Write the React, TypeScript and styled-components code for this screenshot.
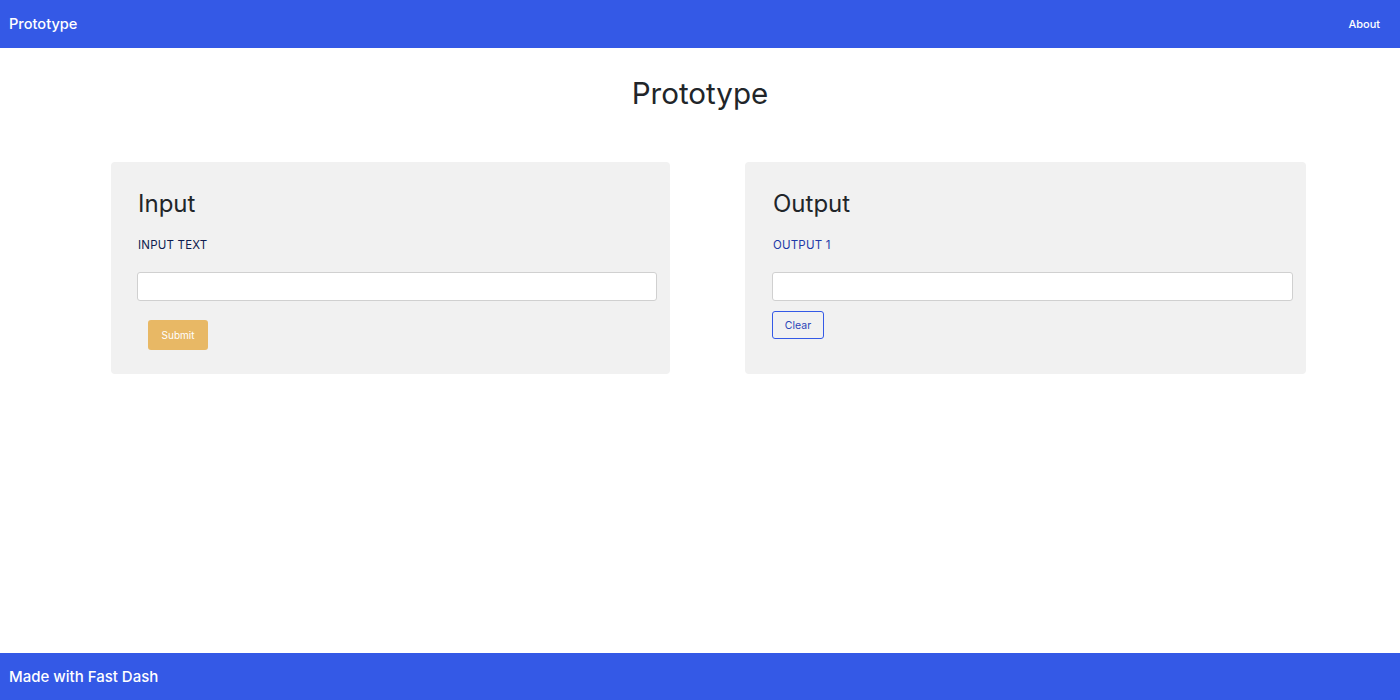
import React from "react";
import styled, { createGlobalStyle } from "styled-components";

const Global = createGlobalStyle`
  html, body { margin: 0; padding: 0; }
  body { font-family: Inter, "Noto Sans", sans-serif; background: #fff; color: #212529; }
  * { box-sizing: border-box; }
`;

const Page = styled.div`
  display: flex;
  flex-direction: column;
  height: 700px;
`;

const NavBar = styled.header`
  height: 48px;
  background: #3459e6;
  display: flex;
  align-items: center;
  justify-content: space-between;
  padding: 0 20px 0 9px;
  color: #fff;
  flex-shrink: 0;
`;

const Brand = styled.div`
  font-size: 14.6px;
  font-weight: 500;
`;

const NavLink = styled.a`
  font-size: 11px;
  font-weight: 500;
  color: #fff;
  text-decoration: none;
`;

const Main = styled.main`
  flex: 1;
  display: flex;
  flex-direction: column;
`;

const Title = styled.h1`
  margin: 0;
  padding-top: 27px;
  height: 114px;
  text-align: center;
  font-size: 29.6px;
  font-weight: 400;
  line-height: 36px;
  color: #212529;
`;

const Row = styled.div`
  display: grid;
  grid-template-columns: 559px 561px;
  gap: 75px;
  padding-left: 111px;
`;

const Card = styled.section<{ $padLeft: number }>`
  background: #f1f1f1;
  border-radius: 4px;
  height: 212px;
  padding: 27px 13px 0 ${(p) => p.$padLeft}px;
  display: flex;
  flex-direction: column;
`;

const CardTitle = styled.h2`
  margin: 0 0 0 1px;
  font-size: 24px;
  font-weight: 400;
  line-height: 30px;
  color: #212529;
`;

const Label = styled.div<{ $tone: string }>`
  margin: 19px 0 0 1px;
  font-size: 11.5px;
  line-height: 14px;
  color: ${(p) => p.$tone};
  letter-spacing: 0.2px;
`;

const TextBox = styled.input`
  margin-top: 20px;
  height: 29px;
  width: 100%;
  border: 1px solid #d0d0d0;
  border-radius: 3px;
  background: #fff;
  outline: none;
`;

const SubmitButton = styled.button`
  margin: 19px 0 0 11px;
  width: 60px;
  height: 30px;
  background: #e8b865;
  border: none;
  border-radius: 3px;
  color: #fff;
  font-family: Inter, sans-serif;
  font-size: 10px;
  align-self: flex-start;
`;

const ClearButton = styled.button`
  margin-top: 10px;
  width: 52px;
  height: 28px;
  background: transparent;
  border: 1px solid #3459e6;
  border-radius: 3px;
  color: #2b45b8;
  font-family: Inter, sans-serif;
  font-size: 10.5px;
  align-self: flex-start;
`;

const Footer = styled.footer`
  height: 47px;
  background: #3459e6;
  color: #fff;
  display: flex;
  align-items: center;
  padding-left: 9px;
  font-size: 15px;
  font-weight: 500;
  flex-shrink: 0;
`;

export default function App() {
  return (
    <>
      <Global />
      <Page>
        <NavBar>
          <Brand>Prototype</Brand>
          <NavLink href="#">About</NavLink>
        </NavBar>
        <Main>
          <Title>Prototype</Title>
          <Row>
            <Card $padLeft={26}>
              <CardTitle>Input</CardTitle>
              <Label $tone="#0d1b4f">INPUT TEXT</Label>
              <TextBox type="text" />
              <SubmitButton>Submit</SubmitButton>
            </Card>
            <Card $padLeft={27}>
              <CardTitle>Output</CardTitle>
              <Label $tone="#1d3aa8">OUTPUT 1</Label>
              <TextBox type="text" />
              <ClearButton>Clear</ClearButton>
            </Card>
          </Row>
        </Main>
        <Footer>Made with Fast Dash</Footer>
      </Page>
    </>
  );
}
